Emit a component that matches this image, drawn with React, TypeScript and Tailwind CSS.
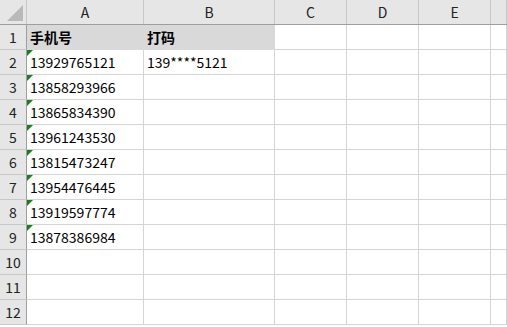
import React from 'react';

const cols = ['A', 'B', 'C', 'D', 'E', ''];
const colW = ['w-[117px]', 'w-[131px]', 'w-[72px]', 'w-[72px]', 'w-[72px]', 'flex-1'];

const phones = [
  '13929765121',
  '13858293966',
  '13865834390',
  '13961243530',
  '13815473247',
  '13954476445',
  '13919597774',
  '13878386984',
];

const font = { fontFamily: '"Noto Sans CJK SC", "Noto Sans", sans-serif' };

// green "number stored as text" marker in the top-left corner of a cell
const Flag = () => (
  <span className="absolute left-0 top-0 h-0 w-0 border-l-[6px] border-t-[6px] border-l-transparent border-t-[#1a7f1a] rotate-[-90deg]" />
);

function Cell({ i, row, children }: { i: number; row: number; children?: React.ReactNode }) {
  const filled = row === 1 && i < 2;
  return (
    <div
      className={`relative flex h-full shrink-0 items-center pl-[3px] text-[14px] text-black ${colW[i]} ${
        filled ? 'bg-[#d9d9d9] border-r border-b border-[#d9d9d9] font-bold' : 'bg-white border-r border-b border-[#d4d4d4]'
      }`}
    >
      {children}
    </div>
  );
}

export default function App() {
  const rows = Array.from({ length: 12 }, (_, k) => k + 1);
  return (
    <div className="h-[327px] w-[507px] overflow-hidden bg-white" style={font}>
      {/* column letters */}
      <div className="flex h-[25px] bg-[#e6e6e6] border-b border-[#9e9e9e]">
        <div className="relative w-[27px] shrink-0 border-r border-[#c8c8c8]">
          <span className="absolute bottom-[3px] right-[3px] h-0 w-0 border-b-[16px] border-l-[16px] border-b-[#b9b9b9] border-l-transparent" />
        </div>
        {cols.map((c, i) => (
          <div
            key={i}
            className={`flex shrink-0 items-center justify-center text-[14px] text-[#222] border-r border-[#c8c8c8] ${colW[i]}`}
          >
            {c}
          </div>
        ))}
      </div>

      {rows.map((r) => (
        <div key={r} className="flex h-[25px]">
          <div className="flex w-[27px] shrink-0 items-center justify-center bg-[#e6e6e6] border-r border-b border-r-[#9e9e9e] border-b-[#c8c8c8] text-[14px] text-[#222]">
            {r}
          </div>
          {cols.map((_, i) => (
            <Cell key={i} i={i} row={r}>
              {r === 1 && i === 0 && '手机号'}
              {r === 1 && i === 1 && '打码'}
              {r >= 2 && r <= 9 && i === 0 && (
                <>
                  <Flag />
                  {phones[r - 2]}
                </>
              )}
              {r === 2 && i === 1 && '139****5121'}
            </Cell>
          ))}
        </div>
      ))}
    </div>
  );
}
